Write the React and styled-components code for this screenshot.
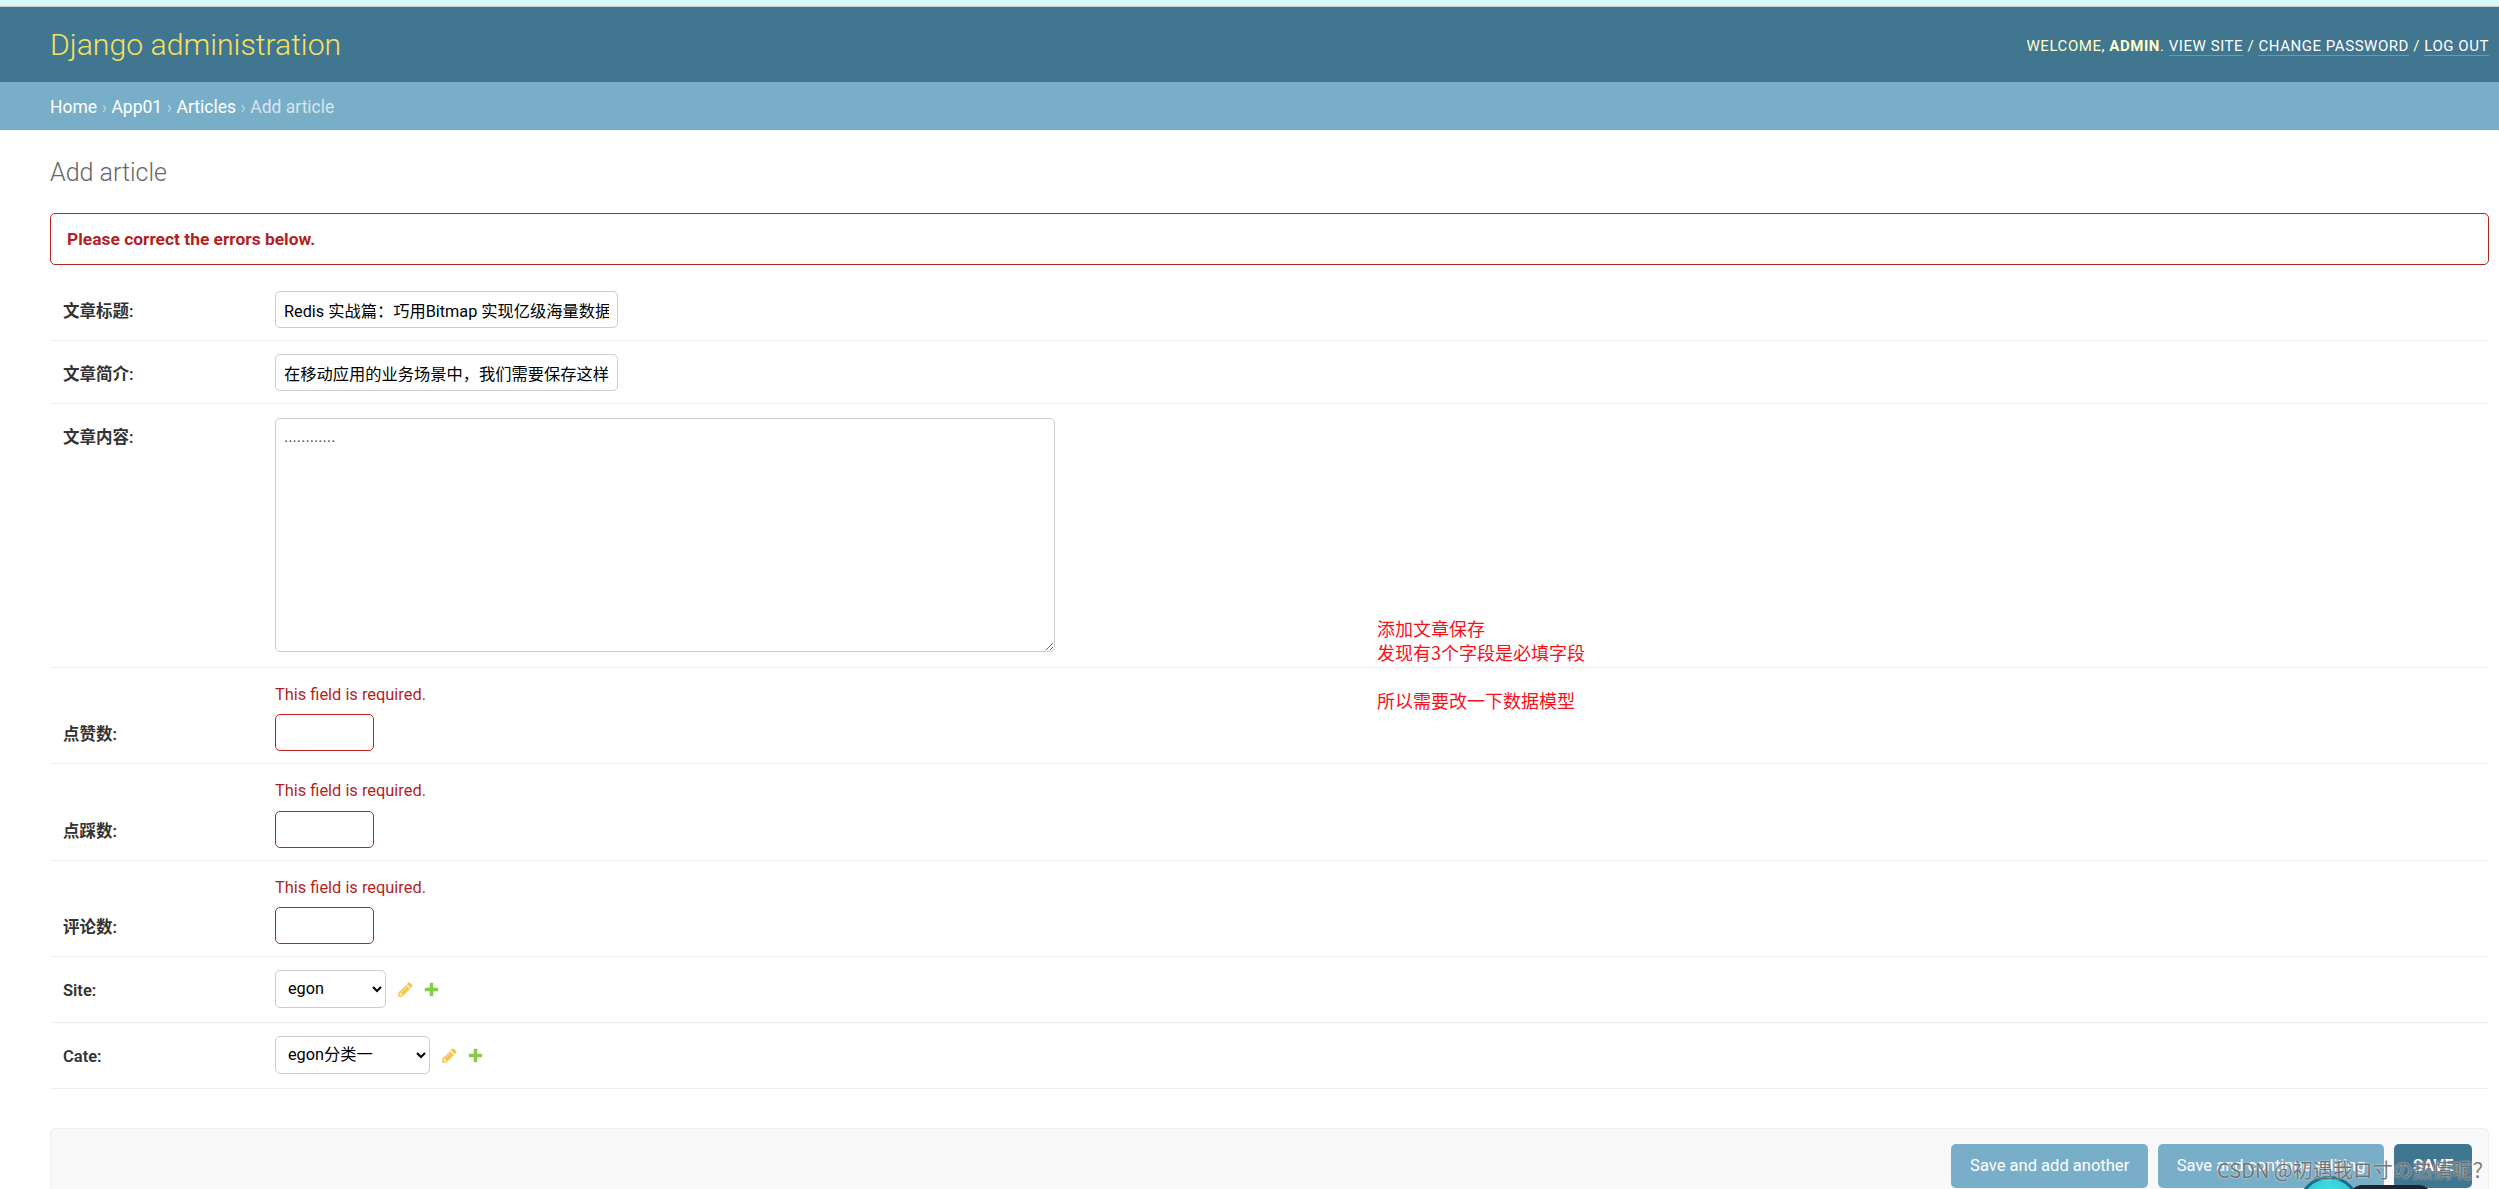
import React from 'react';
import styled, { createGlobalStyle } from 'styled-components';

const Global = createGlobalStyle`
  html, body {
    margin: 0;
    height: 100%;
    overflow: hidden;
    background: #fff;
  }
  body {
    font-family: Roboto, "Noto Sans CJK SC", "Liberation Sans", sans-serif;
    font-size: 17.5px;
    color: #333;
  }
  * { box-sizing: border-box; }
`;

const ChangeIcon = () => (
  <IconSvg viewBox="0 0 1792 1792">
    <path fill="#f5c64a" d="M491 1536l91-91-235-235-91 91v107h128v128h107zm523-928q0-22-22-22-10 0-17 7l-542 542q-7 7-7 17 0 22 22 22 10 0 17-7l542-542q7-7 7-17zm-54-192l416 416-832 832h-416v-416zm683 96q0 53-37 90l-166 166-416-416 166-165q36-38 90-38 53 0 91 38l235 234q37 39 37 91z" />
  </IconSvg>
);

const AddIcon = () => (
  <IconSvg viewBox="0 0 1792 1792">
    <path fill="#85cc4a" d="M1600 796v192q0 40-28 68t-68 28h-416v416q0 40-28 68t-68 28h-192q-40 0-68-28t-28-68v-416h-416q-40 0-68-28t-28-68v-192q0-40 28-68t68-28h416v-416q0-40 28-68t68-28h192q40 0 68 28t28 68v416h416q40 0 68 28t28 68z" />
  </IconSvg>
);

const Field = ({ label, error, children }) => (
  <Row>
    {error && <ErrorText>This field is required.</ErrorText>}
    <Label>{label}:</Label>
    <Control>{children}</Control>
  </Row>
);

const RelatedSelect = ({ width, option }) => (
  <>
    <Select $width={width} defaultValue={option}>
      <option>{option}</option>
    </Select>
    <ChangeIcon />
    <AddIcon />
  </>
);

export default function App() {
  return (
    <>
      <Global />
      <TopStrip />
      <Header>
        <Branding>Django administration</Branding>
        <UserTools>
          Welcome, <strong>admin</strong>.{' '}
          <UserLink>View site</UserLink> / <UserLink>Change password</UserLink> / <UserLink>Log out</UserLink>
        </UserTools>
      </Header>
      <Breadcrumbs>
        <Crumb>Home</Crumb> › <Crumb>App01</Crumb> › <Crumb>Articles</Crumb> › <Current>Add article</Current>
      </Breadcrumbs>
      <Content>
        <Title>Add article</Title>
        <ErrorNote>Please correct the errors below.</ErrorNote>
        <Field label="文章标题">
          <TextInput readOnly value="Redis 实战篇：巧用Bitmap 实现亿级海量数据统计" />
        </Field>
        <Field label="文章简介">
          <TextInput readOnly value="在移动应用的业务场景中，我们需要保存这样的信息" />
        </Field>
        <Field label="文章内容">
          <TextArea readOnly value="............" />
        </Field>
        <Field label="点赞数" error><NumberInput /></Field>
        <Field label="点踩数" error><NumberInput /></Field>
        <Field label="评论数" error><NumberInput /></Field>
        <Field label="Site">
          <RelatedSelect width={111} option="egon" />
        </Field>
        <Field label="Cate">
          <RelatedSelect width={155} option="egon分类一" />
        </Field>
        <SubmitRow>
          <SubmitButton>Save and add another</SubmitButton>
          <SubmitButton>Save and continue editing</SubmitButton>
          <SubmitButton $primary>SAVE</SubmitButton>
        </SubmitRow>
      </Content>
      <Note>
        添加文章保存{'\n'}发现有3个字段是必填字段{'\n'}{'\n'}所以需要改一下数据模型
      </Note>
      <Avatar />
      <Pill />
      <Watermark>CSDN @初遇我ロ寸の热情呢？</Watermark>
    </>
  );
}

const TopStrip = styled.div`
  height: 7px;
  background: #d8f8f8;
  border-bottom: 1px solid #c4cccc;
`;

const Header = styled.header`
  height: 75px;
  padding: 0 10px 0 50px;
  display: flex;
  align-items: center;
  justify-content: space-between;
  background: #417690;
`;

const Branding = styled.h1`
  margin: 0;
  font-size: 30.2px;
  font-weight: 300;
  color: #f8e160;
`;

const UserTools = styled.div`
  padding-top: 2px;
  font-size: 15px;
  font-weight: 400;
  letter-spacing: 0.55px;
  text-transform: uppercase;
  color: #ffc;
  strong { font-weight: 700; }
`;

const UserLink = styled.a`
  color: #fff;
  border-bottom: 1px solid rgba(255, 255, 255, 0.25);
`;

const Breadcrumbs = styled.nav`
  height: 48px;
  padding: 2px 0 0 50px;
  display: flex;
  align-items: center;
  gap: 0.26em;
  font-size: 17.5px;
  font-weight: 300;
  color: rgba(255, 255, 255, 0.7);
  background: #79aec8;
`;

const Crumb = styled.a`
  color: #fff;
  font-weight: 400;
`;

const Current = styled.span`
  font-weight: 400;
`;

const Content = styled.main`
  padding: 0 10px 0 50px;
`;

const Title = styled.h2`
  margin: 0;
  padding-top: 27px;
  height: 83px;
  font-size: 25px;
  line-height: 32px;
  font-weight: 300;
  color: #666;
`;

const ErrorNote = styled.p`
  margin: 0 0 13px;
  height: 52px;
  padding: 0 16px;
  display: flex;
  align-items: center;
  font-size: 17.4px;
  font-weight: 700;
  color: #b41f1f;
  border: 1px solid #ba2121;
  border-radius: 5px;
`;

const Row = styled.div`
  padding: 13px 0 12px 13px;
  display: grid;
  grid-template-columns: 212px 1fr;
  border-bottom: 1px solid #eee;
`;

const ErrorText = styled.div`
  grid-column: 2;
  margin-bottom: 5.34px;
  font-size: 16.4px;
  line-height: 28px;
  color: #b41f1f;
`;

const Label = styled.label`
  grid-column: 1;
  padding-top: 11px;
  font-size: 16.5px;
  line-height: 20px;
  font-weight: 600;
  color: #333;
`;

const Control = styled.div`
  grid-column: 2;
  display: flex;
  align-items: center;
`;

const TextInput = styled.input`
  width: 343px;
  height: 37px;
  padding: 0 8px;
  font-family: Roboto, "Noto Sans CJK SC", sans-serif;
  font-size: 16.25px;
  color: #000;
  background: #fff;
  border: 1px solid #ccc;
  border-radius: 5px;
  outline: none;
`;

const NumberInput = styled(TextInput)`
  width: 99px;
  border-color: #ba2121;
`;

const TextArea = styled.textarea`
  display: block;
  width: 780px;
  height: 234px;
  margin: 1px 0 3px;
  padding: 8px;
  font-family: Roboto, "Noto Sans CJK SC", sans-serif;
  font-size: 16.25px;
  color: #555;
  background: #fff;
  border: 1px solid #ccc;
  border-radius: 5px;
  outline: none;
`;

const Select = styled.select`
  width: ${(p) => p.$width}px;
  height: 38px;
  margin: 0 0 2px;
  padding: 0 8px;
  font-family: Roboto, "Noto Sans CJK SC", sans-serif;
  font-size: 16.25px;
  color: #000;
  background: #fff;
  border: 1px solid #ccc;
  border-radius: 5px;
  outline: none;
`;

const IconSvg = styled.svg`
  width: 17px;
  height: 17px;
  margin-left: 11px;
  & + & { margin-left: 9px; }
  flex: none;
`;

const SubmitRow = styled.div`
  margin-top: 39px;
  height: 90px;
  padding: 15px 16px 0 0;
  display: flex;
  justify-content: flex-end;
  align-items: flex-start;
  gap: 10px;
  background: #f8f8f8;
  border: 1px solid #eee;
  border-radius: 5px;
`;

const SubmitButton = styled.button`
  height: 44px;
  padding: 0 18.75px;
  font-family: Roboto, sans-serif;
  font-size: 16.55px;
  font-weight: ${(p) => (p.$primary ? 500 : 400)};
  color: #fff;
  background: ${(p) => (p.$primary ? '#417690' : '#79aec8')};
  border: none;
  border-radius: 5px;
`;

const Note = styled.div`
  position: absolute;
  left: 1377px;
  top: 616px;
  font-family: "Noto Sans CJK SC", sans-serif;
  font-size: 18px;
  font-weight: 400;
  line-height: 24px;
  white-space: pre;
  color: #fa0f19;
`;

const Watermark = styled.div`
  position: absolute;
  left: 2217px;
  top: 1155px;
  font-family: "Noto Sans CJK SC", sans-serif;
  font-size: 20px;
  line-height: 30px;
  white-space: nowrap;
  color: rgba(95, 95, 95, 0.85);
  text-shadow: 0 0 2px rgba(255, 255, 255, 0.9);
`;

const Avatar = styled.div`
  position: absolute;
  left: 2298px;
  top: 1176px;
  width: 62px;
  height: 62px;
  border-radius: 50%;
  background: radial-gradient(circle at 50% 30%, #45e6e8 0%, #2cc5d2 55%, #1b6f8c 100%);
  border: 3px solid #1f6a86;
`;

const Pill = styled.div`
  position: absolute;
  left: 2350px;
  top: 1185px;
  width: 81px;
  height: 30px;
  border-radius: 12px;
  background: #1b2430;
`;
